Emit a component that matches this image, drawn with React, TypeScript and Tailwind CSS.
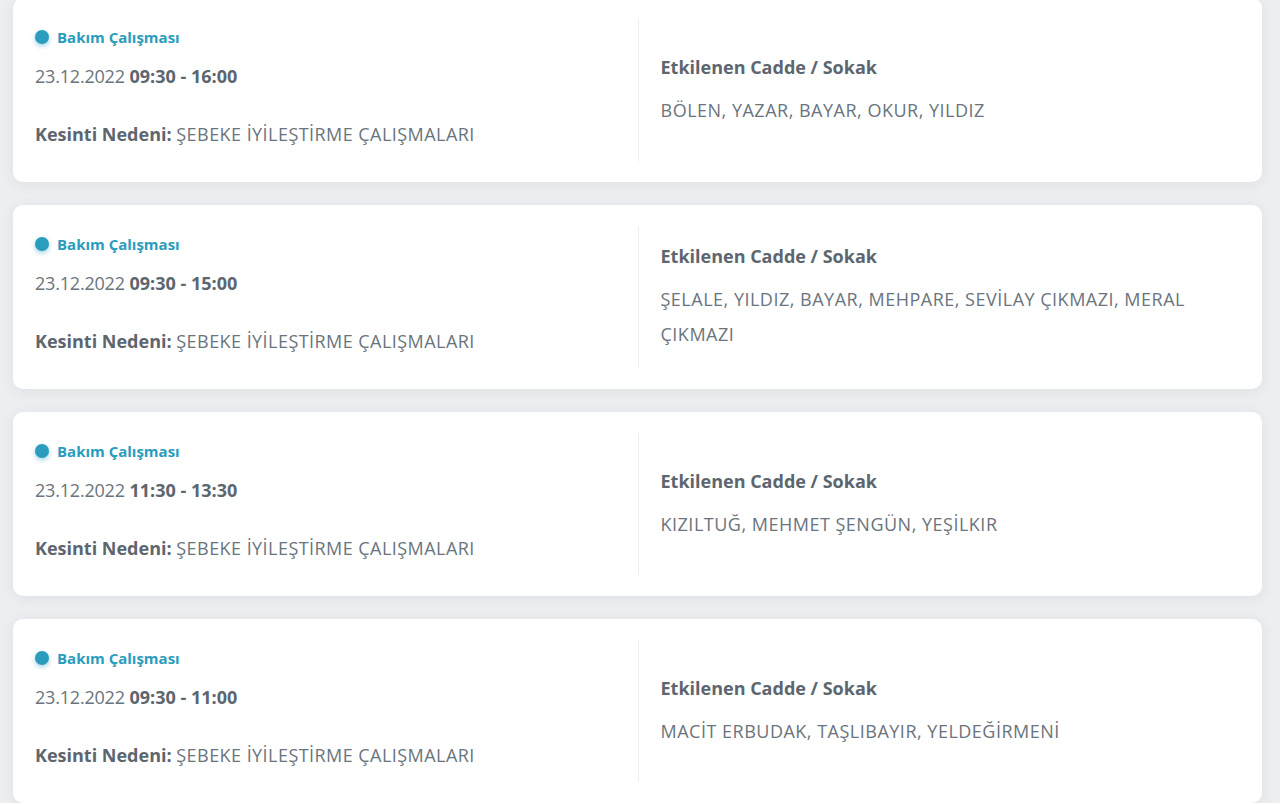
import React from 'react';

interface Outage {
  date: string;
  time: string;
  reason: string;
  streets: string;
}

const outages: Outage[] = [
  { date: '23.12.2022', time: '09:30 - 16:00', reason: 'ŞEBEKE İYİLEŞTİRME ÇALIŞMALARI', streets: 'BÖLEN, YAZAR, BAYAR, OKUR, YILDIZ' },
  { date: '23.12.2022', time: '09:30 - 15:00', reason: 'ŞEBEKE İYİLEŞTİRME ÇALIŞMALARI', streets: 'ŞELALE, YILDIZ, BAYAR, MEHPARE, SEVİLAY ÇIKMAZI, MERAL ÇIKMAZI' },
  { date: '23.12.2022', time: '11:30 - 13:30', reason: 'ŞEBEKE İYİLEŞTİRME ÇALIŞMALARI', streets: 'KIZILTUĞ, MEHMET ŞENGÜN, YEŞİLKIR' },
  { date: '23.12.2022', time: '09:30 - 11:00', reason: 'ŞEBEKE İYİLEŞTİRME ÇALIŞMALARI', streets: 'MACİT ERBUDAK, TAŞLIBAYIR, YELDEĞİRMENİ' },
];

function OutageCard({ outage }: { outage: Outage }) {
  return (
    <div className="bg-white rounded-[10px] h-[184px] py-[21px] flex shadow-[0_2px_14px_rgba(40,50,60,0.07)]">
      {/* Left */}
      <div className="basis-1/2 shrink-0 pl-[22px] pt-[8px] flex flex-col">
        <div className="flex items-center h-[20px]">
          <span className="w-[14px] h-[14px] rounded-full bg-[#2a9cbd] shadow-[0_2px_5px_rgba(42,156,189,0.45)]" />
          <span className="ml-[8px] text-[15px] font-bold text-[#2a9cbd]">Bakım Çalışması</span>
        </div>
        <div className="mt-[17px] h-[24px] leading-[24px] text-[18px] text-[#6a747c]">
          <span className="tracking-[-0.2px]">{outage.date}</span>{' '}
          <span className="font-bold text-[#5d666e]">{outage.time}</span>
        </div>
        <div className="mt-[34px] h-[24px] leading-[24px] text-[18px] text-[#6a747c]">
          <span className="font-bold text-[#5d666e]">Kesinti Nedeni:</span>{' '}
          <span className="tracking-[0.45px]">{outage.reason}</span>
        </div>
      </div>
      {/* Right */}
      <div className="basis-1/2 shrink-0 border-l border-[#eceef0] pl-[22px] pr-[60px] pt-[2px] flex flex-col justify-center">
        <div className="text-[18px] leading-[24px] font-bold text-[#5d666e]">Etkilenen Cadde / Sokak</div>
        <div className="mt-[14px] text-[18px] leading-[35px] text-[#6a747c] tracking-[0.5px]">{outage.streets}</div>
      </div>
    </div>
  );
}

export default function App() {
  return (
    <div className="min-h-[805px] bg-[#eceef1] pl-[13px] pr-[18px] font-['Open_Sans',sans-serif]">
      <div className="-mt-[2px] flex flex-col gap-[23px]">
        {outages.map((o, i) => (
          <OutageCard key={i} outage={o} />
        ))}
      </div>
    </div>
  );
}
